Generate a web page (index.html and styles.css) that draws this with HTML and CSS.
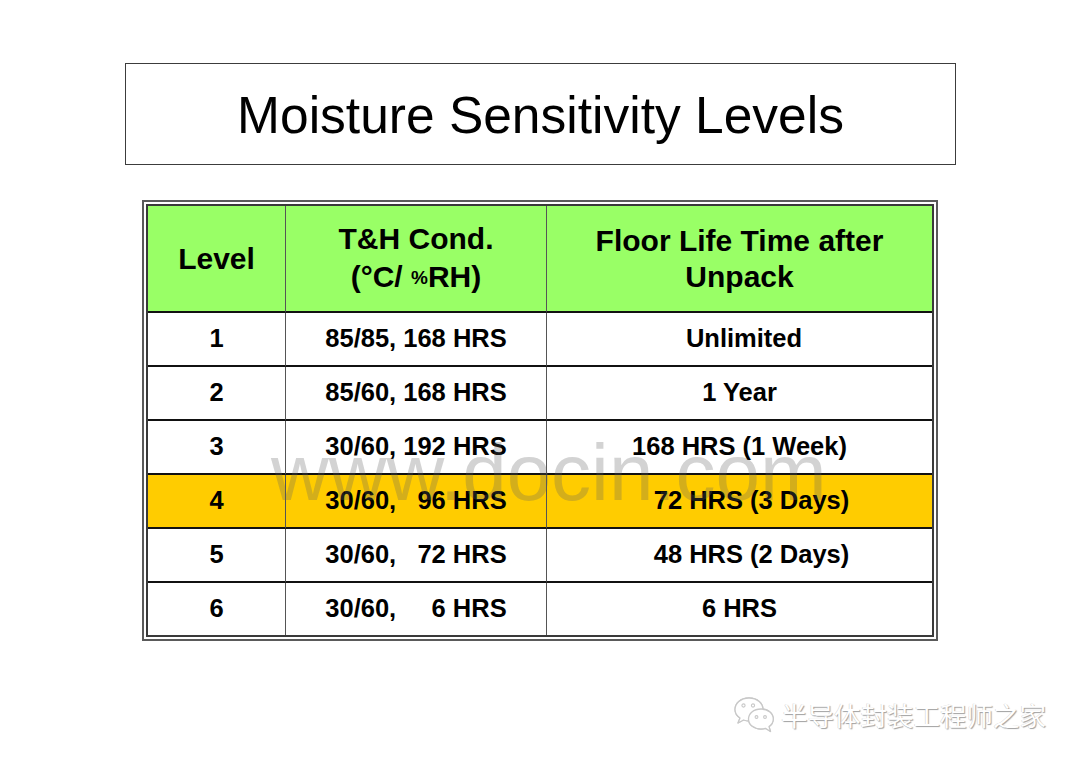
FILE: index.html
```html
<!DOCTYPE html>
<html lang="en">
<head>
<meta charset="utf-8">
<title>Moisture Sensitivity Levels</title>
<link rel="stylesheet" href="styles.css">
</head>
<body>
<div class="page">
  <div class="title-box">
    <h1 class="title">Moisture Sensitivity Levels</h1>
  </div>

  <div class="table-wrap">
    <table class="msl">
      <colgroup>
        <col class="c1">
        <col class="c2">
        <col class="c3">
      </colgroup>
      <thead>
        <tr class="head">
          <th class="h-level">Level</th>
          <th class="h-cond">T&amp;H Cond.<br>(°C/ <span class="pct">%</span>RH)</th>
          <th class="h-floor">Floor Life Time after<br>Unpack</th>
        </tr>
      </thead>
      <tbody>
        <tr><td>1</td><td class="pre">85/85, 168 HRS</td><td class="nudge">Unlimited</td></tr>
        <tr><td>2</td><td class="pre">85/60, 168 HRS</td><td>1 Year</td></tr>
        <tr><td>3</td><td class="pre">30/60, 192 HRS</td><td>168 HRS (1 Week)</td></tr>
        <tr class="hl"><td>4</td><td class="pre">30/60,   96 HRS</td><td class="indent">72 HRS (3 Days)</td></tr>
        <tr><td>5</td><td class="pre">30/60,   72 HRS</td><td class="indent">48 HRS (2 Days)</td></tr>
        <tr class="last"><td>6</td><td class="pre">30/60,     6 HRS</td><td>6 HRS</td></tr>
      </tbody>
    </table>
    <div class="watermark">www.docin.com</div>
  </div>

  <div class="footer">
    <svg class="wechat" width="44" height="38" viewBox="0 0 44 38" aria-hidden="true">
      <g fill="#fff" stroke="#c8c8c8" stroke-width="1.3" stroke-linejoin="round">
        <path d="M17 2 C8.5 2 3 7.5 3 13.5 C3 17 5 20 8 22 L6 27 L11.5 24 C13.2 24.6 15 25 17 25 C25.5 25 31 19.5 31 13.5 C31 7.5 25.5 2 17 2 Z"/>
        <path d="M29 13 C21.5 13 16.5 17.5 16.5 23 C16.5 28.5 21.5 33 29 33 C30.6 33 32 32.8 33.4 32.3 L38.5 35.5 L37 30.6 C39.6 28.8 41.3 26 41.3 23 C41.3 17.5 36.4 13 29 13 Z"/>
      </g>
      <g fill="none" stroke="#c8c8c8" stroke-width="1.1">
        <circle cx="11.5" cy="9.5" r="1.6"/>
        <circle cx="21" cy="9.5" r="1.6"/>
        <circle cx="24.5" cy="21" r="1.4"/>
        <circle cx="33" cy="21" r="1.4"/>
      </g>
    </svg>
    <span class="brand">半导体封装工程师之家</span>
  </div>
</div>
</body>
</html>
```

FILE: styles.css
```css
html, body {
  margin: 0;
  padding: 0;
  background: #ffffff;
}

body {
  font-family: "Liberation Sans", Arial, "Noto Sans CJK SC", sans-serif;
  color: #000;
}

.page {
  position: relative;
  width: 1080px;
  height: 763px;
  padding-top: 63px;
  box-sizing: border-box;
  overflow: hidden;
}

/* Title */
.title-box {
  margin-left: 125px;
  width: 831px;
  height: 102px;
  box-sizing: border-box;
  border: 1px solid #3c3c3c;
  display: flex;
  align-items: center;
  justify-content: center;
}

.title {
  margin: 0;
  padding-top: 4px;
  font-weight: 400;
  font-size: 51.5px;
  line-height: 1;
  white-space: nowrap;
}

/* Table */
.table-wrap {
  position: relative;
  margin-top: 35px;
  margin-left: 142px;
  width: 796px;
  box-sizing: border-box;
  border: 2px solid #5a5a5a;
  padding: 2px;
}

.msl {
  width: 100%;
  table-layout: fixed;
  border-collapse: separate;
  border-spacing: 0;
  border: 2px solid #3a3a3a;
  font-weight: 700;
}

.c1 { width: 138px; }
.c2 { width: 261px; }
.c3 { width: auto; }

.msl th,
.msl td {
  padding: 0;
  text-align: center;
  vertical-align: middle;
  border-right: 1px solid #555;
  border-bottom: 2px solid #111;
}

.msl th:last-child,
.msl td:last-child {
  border-right: none;
}

.msl tr.last td {
  border-bottom: none;
}

.head th {
  height: 105px;
  background: #99ff66;
  font-size: 30px;
  font-weight: 700;
}

.h-level {
  padding-top: 2px;
}

.h-cond {
  line-height: 38px;
  padding-top: 6px;
}

.h-floor {
  font-size: 30.5px;
  line-height: 36px;
  padding-top: 2px;
}

.pct {
  font-size: 19px;
  vertical-align: 3px;
}

.msl td {
  height: 52px;
  font-size: 25.5px;
  line-height: 1;
}

.pre {
  white-space: pre;
}

.indent {
  padding-left: 24px !important;
}

.nudge {
  padding-left: 9px !important;
}

.hl td {
  background: #ffcc00;
}

/* docin watermark */
.watermark {
  position: absolute;
  left: 127px;
  top: 231px;
  font-family: "Liberation Sans", Arial, sans-serif;
  font-weight: 400;
  font-size: 80px;
  line-height: 80px;
  color: rgba(96, 96, 96, 0.28);
  white-space: nowrap;
  pointer-events: none;
}

/* footer brand */
.footer {
  display: flex;
  justify-content: flex-end;
  align-items: center;
  gap: 5px;
  margin-top: 55px;
  padding-right: 34px;
}

.wechat {
  display: block;
  filter: drop-shadow(0.5px 0.8px 0.6px rgba(0, 0, 0, 0.2));
}

.brand {
  font-family: "Noto Sans CJK SC", "Noto Sans", sans-serif;
  font-size: 26.5px;
  line-height: 38px;
  color: #ffffff;
  text-shadow: 1px 1px 1px #a0a0a0, -0.5px -0.5px 0.5px #d0d0d0;
}
```
